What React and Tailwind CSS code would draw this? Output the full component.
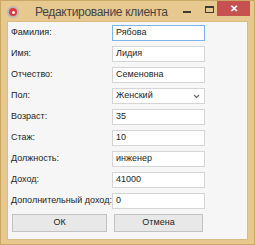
import React from "react";

const rows = [
  { label: "Фамилия:", value: "Рябова", focus: true },
  { label: "Имя:", value: "Лидия" },
  { label: "Отчество:", value: "Семеновна" },
  { label: "Пол:", value: "Женский", select: true },
  { label: "Возраст:", value: "35" },
  { label: "Стаж:", value: "10" },
  { label: "Должность:", value: "инженер" },
  { label: "Доход:", value: "41000" },
  { label: "Дополнительный доход:", value: "0" },
];

export default function App() {
  return (
    <div className="w-[255px] h-[245px] bg-[#e7c98f] border border-[#c9a866] flex flex-col overflow-hidden" style={{ fontFamily: '"Liberation Sans", Arial, sans-serif' }}>
      <div className="h-[20px] flex items-start relative">
        <div className="ml-[6px] mt-[5px] w-[12px] h-[12px] rounded-full bg-[#b9b9b9] flex items-center justify-center">
          <div className="w-[8px] h-[8px] rounded-full bg-[#e0393c] flex items-center justify-center">
            <div className="w-[3px] h-[3px] rounded-full bg-white" />
          </div>
        </div>
        <div className="ml-[16px] mt-[4px] text-[12px] leading-[15px] tracking-[-0.3px] text-[#444] whitespace-nowrap">Редактирование клиента</div>
        <div className="ml-auto flex items-start">
          <div className="w-[8px] h-[2px] bg-[#3a3a3a] mt-[10px] mr-[14px]" />
          <div className="w-[9px] h-[7px] border border-[#3a3a3a] border-t-2 mt-[5px] mr-[3px]" />
          <div className="w-[33px] h-[16px] bg-[#c75050] flex items-center justify-center text-white text-[10px] font-bold mr-[4px] -mt-[1px]">✕</div>
        </div>
      </div>
      <div className="ml-[6px] mr-[6px] mb-[4px] flex-1 bg-[#f6f6f6] border border-[#d9bc82] flex flex-col pt-[3px] pl-[3px] gap-[5px]">
        {rows.map((r) => (
          <div key={r.label} className="flex items-center h-[16px]">
            <div className="w-[101px] text-[9px] text-[#1e1e1e] whitespace-nowrap">{r.label}</div>
            <div
              className={`w-[93px] h-[16px] bg-white border flex items-center pl-[3px] text-[9px] text-[#1e1e1e] ${
                r.focus ? "border-[#7eb4ea]" : "border-[#d5d5d5]"
              }`}
            >
              <span className="flex-1">{r.value}</span>
              {r.select && (
                <svg width="7" height="5" viewBox="0 0 7 5" className="mr-[4px]">
                  <path d="M1 1 L3.5 3.5 L6 1" stroke="#666" strokeWidth="1.2" fill="none" />
                </svg>
              )}
            </div>
          </div>
        ))}
        <div className="flex gap-[7px] pl-[1px]">
          <div className="w-[95px] h-[18px] bg-[#e8e8e8] border border-[#c2c2c2] flex items-center justify-center text-[9px] text-[#1e1e1e]">ОК</div>
          <div className="w-[89px] h-[18px] bg-[#e8e8e8] border border-[#c2c2c2] flex items-center justify-center text-[9px] text-[#1e1e1e]">Отмена</div>
        </div>
      </div>
    </div>
  );
}
